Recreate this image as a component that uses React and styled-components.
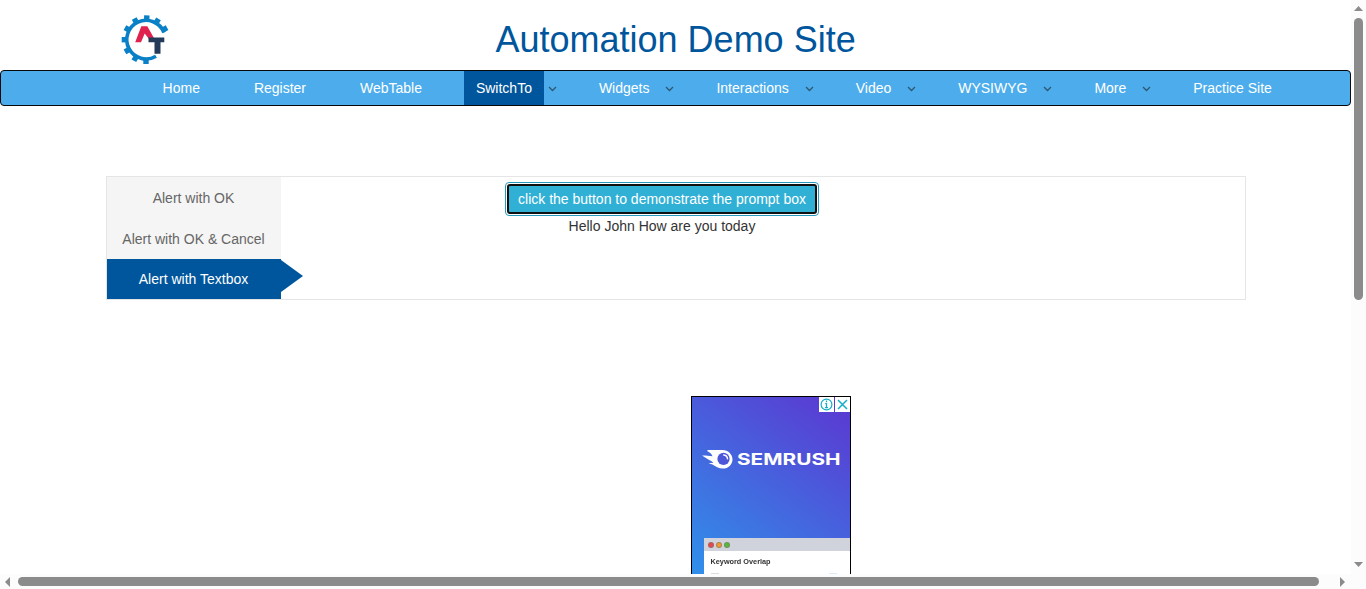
import React from "react";
import styled, { createGlobalStyle } from "styled-components";

const GlobalStyle = createGlobalStyle`
  * { box-sizing: border-box; }
  html, body { margin: 0; height: 589px; overflow: hidden; background: #fff; }
  body { font: 14px/20px "Liberation Sans", Arial, sans-serif; color: #333; }
  svg { display: block; }
`;

const Window = styled.div`
  display: grid;
  grid-template: 574px 15px / 1351px 15px;
  width: 1366px;
  height: 589px;
  overflow: hidden;
`;

const Page = styled.div`
  overflow: hidden;
`;

const Header = styled.header`
  display: grid;
  grid-template-columns: 374.5px 1fr;
  height: 70px;
  padding: 14px 0 0 121px;
`;

const Title = styled.h1`
  margin: 6px 0 0;
  font-size: 36px;
  line-height: 40px;
  font-weight: 400;
  white-space: nowrap;
  color: #00569c;
`;

const Nav = styled.nav`
  display: flex;
  height: 36px;
  padding-left: 149.6px;
  border: 1px solid #080808;
  border-radius: 4px;
  background: #4dadec;
`;

const NavItem = styled.div`
  display: flex;
  align-items: center;
  margin-right: 29.95px;
`;

const NavLink = styled.a`
  height: 34px;
  padding: 0 12px;
  line-height: 34px;
  color: #fff;
  white-space: nowrap;
  background: ${(p) => (p.$active ? "#00569c" : "transparent")};
`;

const Caret = styled.span`
  width: 13px;
  padding: 1px 0 0 4px;
`;

const Panel = styled.section`
  display: grid;
  grid-template-columns: 174px 1fr;
  width: 1140px;
  height: 124px;
  margin: 70px 0 0 106px;
  border: 1px solid #e5e5e5;
`;

const Tabs = styled.div`
  display: flex;
  flex-direction: column;
`;

const Tab = styled.a`
  position: relative;
  height: ${(p) => (p.$active ? 40 : 41)}px;
  padding-right: 1px;
  line-height: ${(p) => (p.$active ? 40 : 42)}px;
  text-align: center;
  color: ${(p) => (p.$active ? "#fff" : "#666")};
  background: ${(p) => (p.$active ? "#00569c" : "#f5f5f5")};
`;

const Pointer = styled.svg`
  position: absolute;
  left: 174px;
  top: 1px;
`;

const TabContent = styled.div`
  display: flex;
  flex-direction: column;
  align-items: center;
  width: 762px;
  padding-top: 5px;
`;

const FocusRing = styled.div`
  padding: 1px;
  border: 1px solid #269abc;
  border-radius: 4px;
`;

const PromptButton = styled.button`
  display: block;
  width: 310px;
  height: 30px;
  padding: 0;
  border: 2px solid #101010;
  border-radius: 3px;
  background: #31b0d5;
  color: #fff;
  font: inherit;
  white-space: nowrap;
`;

const Greeting = styled.p`
  margin: 0;
`;

const Ad = styled.aside`
  position: relative;
  width: 160px;
  height: 600px;
  margin: 96px 0 0 691px;
  padding: 49px 0 0 10px;
  border: 1px solid #000;
  background: linear-gradient(37deg, #3090ea 0, #5c36d1 100%) 0 0 / 158px 177px no-repeat;
`;

const AdControls = styled.div`
  position: absolute;
  top: 0;
  right: 0;
  display: flex;
  gap: 1px;
`;

const AdControl = styled.span`
  width: 15px;
  height: 15px;
  background: #fff;
`;

const Browser = styled.div`
  height: 400px;
  margin: 68px 0 0 2px;
  background: #fff;
`;

const BrowserBar = styled.div`
  display: flex;
  align-items: center;
  gap: 2px;
  height: 13px;
  padding-left: 4px;
  background: #d0d3db;
`;

const Dot = styled.i`
  width: 6px;
  height: 6px;
  border: 1px solid #7779;
  border-radius: 50%;
  background: ${(p) => p.$color};
`;

const BrowserTitle = styled.div`
  padding: 6px 0 0 6.5px;
  font: bold 7.3px/10px "Liberation Sans", Arial, sans-serif;
  color: #333;
  filter: blur(0.3px);
`;

const BrowserRow = styled.div`
  display: flex;
  justify-content: space-between;
  padding: 6px 13px 0 7px;
`;

const Smudge = styled.i`
  width: 8px;
  height: 1px;
  background: ${(p) => p.$color};
`;

const Scrollbar = styled.div`
  display: flex;
  flex-direction: ${(p) => (p.$vertical ? "column" : "row")};
  align-items: center;
  background: #fcfcfc;
  padding: ${(p) => (p.$vertical ? "6px 0 7px" : "0 6px 0 5px")};
`;

const Thumb = styled.div`
  width: ${(p) => p.$width}px;
  height: ${(p) => p.$height}px;
  border-radius: 5px;
  background: #8b8b8b;
`;

const ThumbTrack = styled.div`
  display: flex;
  flex: 1;
  padding: ${(p) => p.$pad};
`;

const Corner = styled.div`
  background: #fcfcfc;
`;

const menu = [
  { label: "Home" },
  { label: "Register" },
  { label: "WebTable" },
  { label: "SwitchTo", caret: true, active: true },
  { label: "Widgets", caret: true },
  { label: "Interactions", caret: true },
  { label: "Video", caret: true },
  { label: "WYSIWYG", caret: true },
  { label: "More", caret: true },
  { label: "Practice Site" },
];

const teeth = [2, 31, 60, 180, 210, 240, 270, 300, 331];

function Logo() {
  return (
    <svg width="48" height="52" viewBox="0 0 48 52">
      <g fill="none" stroke="#0a80c6">
        <path d="M43 18.500A19.300 19.300 0 1 0 35 42.200" strokeWidth="3.600" />
        {teeth.map((angle) => (
          <path
            key={angle}
            d="M25 1.400V7"
            strokeWidth="5.400"
            transform={`rotate(${angle} 25 25.700)`}
          />
        ))}
      </g>
      <path d="M20.300 12.300H26.300L33.500 25H28L23.700 19.500L20 28.300H14.200Z" fill="#e0234e" />
      <path d="M27.500 23.500H43.300V28.200H39.500V39.800H33.500V28.200H27.500Z" fill="#233b58" />
    </svg>
  );
}

function Chevron() {
  return (
    <svg width="9" height="6" viewBox="0 0 9 6">
      <path d="M1 1L4.5 4.5L8 1" fill="none" stroke="#2d566f" strokeWidth="1.25" />
    </svg>
  );
}

function SemrushLogo() {
  return (
    <svg width="140" height="24" viewBox="0 0 140 24">
      <path
        d="M6 4H20.5C26 4 30.5 8.200 30.500 13.400C30.500 18.500 26.300 22.500 21 22.500C16.500 22.500 13.800 20.400 10.500 18.400L6.500 17.200L11.500 16.800C9 14.500 4 12.500 0 9.500C3 9.300 7 10 10.500 10.200C10 8 7.500 6.200 5 5Z"
        fill="#fff"
      />
      <circle cx="21.500" cy="12.900" r="6.100" fill="#4c57d9" />
      <path d="M21.700 8.900A4.100 4.100 0 0 1 25.500 12.700" fill="none" stroke="#fff" strokeWidth="1.500" strokeLinecap="round" />
      <text
        x="35"
        y="19"
        fill="#fff"
        fontFamily="Inter, sans-serif"
        fontWeight="700"
        fontSize="16.500"
        textLength="103.500"
        lengthAdjust="spacingAndGlyphs"
      >
        SEMRUSH
      </text>
    </svg>
  );
}

function Arrow({ points, width, height }) {
  return (
    <svg width={width} height={height}>
      <polygon points={points} fill="#8b8b8b" />
    </svg>
  );
}

export default function App() {
  return (
    <Window>
      <GlobalStyle />
      <Page>
        <Header>
          <Logo />
          <Title>Automation Demo Site</Title>
        </Header>
        <Nav>
          {menu.map((item) => (
            <NavItem key={item.label}>
              <NavLink $active={item.active}>{item.label}</NavLink>
              {item.caret && (
                <Caret>
                  <Chevron />
                </Caret>
              )}
            </NavItem>
          ))}
        </Nav>
        <Panel>
          <Tabs>
            <Tab>Alert with OK</Tab>
            <Tab>Alert with OK &amp; Cancel</Tab>
            <Tab $active>
              Alert with Textbox
              <Pointer width="22" height="33">
                <path d="M0 0L22 16L0 32Z" fill="#00569c" />
              </Pointer>
            </Tab>
          </Tabs>
          <TabContent>
            <FocusRing>
              <PromptButton>click the button to demonstrate the prompt box</PromptButton>
            </FocusRing>
            <Greeting>Hello John How are you today</Greeting>
          </TabContent>
        </Panel>
        <Ad>
          <SemrushLogo />
          <Browser>
            <BrowserBar>
              <Dot $color="#f0444a" />
              <Dot $color="#f59a2c" />
              <Dot $color="#58bb35" />
            </BrowserBar>
            <BrowserTitle>Keyword Overlap</BrowserTitle>
            <BrowserRow>
              <Smudge $color="#ddd" />
              <Smudge $color="#dcebf8" />
            </BrowserRow>
          </Browser>
          <AdControls>
            <AdControl>
              <svg width="15" height="15" fill="none" stroke="#15aecb">
                <circle cx="7.500" cy="7.500" r="5.400" strokeWidth="1.200" />
                <path d="M7.500 3.600V5.200M6.300 6.700H7.500V10.600M6 10.700H9" strokeWidth="1.300" />
              </svg>
            </AdControl>
            <AdControl>
              <svg width="15" height="15" fill="none" stroke="#15aecb">
                <path d="M3 3L12 12M12 3L3 12" strokeWidth="1.500" />
              </svg>
            </AdControl>
          </AdControls>
        </Ad>
      </Page>
      <Scrollbar $vertical>
        <Arrow width={9} height={5} points="0,5 4.500,0 9,5" />
        <ThumbTrack $pad="7px 0 0">
          <Thumb $width={9} $height={282} />
        </ThumbTrack>
        <Arrow width={9} height={5} points="0,0 9,0 4.500,5" />
      </Scrollbar>
      <Scrollbar>
        <Arrow width={5} height={10} points="5,0 5,10 0,5" />
        <ThumbTrack $pad="0 0 0 8px">
          <Thumb $width={1301} $height={9} />
        </ThumbTrack>
        <Arrow width={5} height={10} points="0,0 5,5 0,10" />
      </Scrollbar>
      <Corner />
    </Window>
  );
}
